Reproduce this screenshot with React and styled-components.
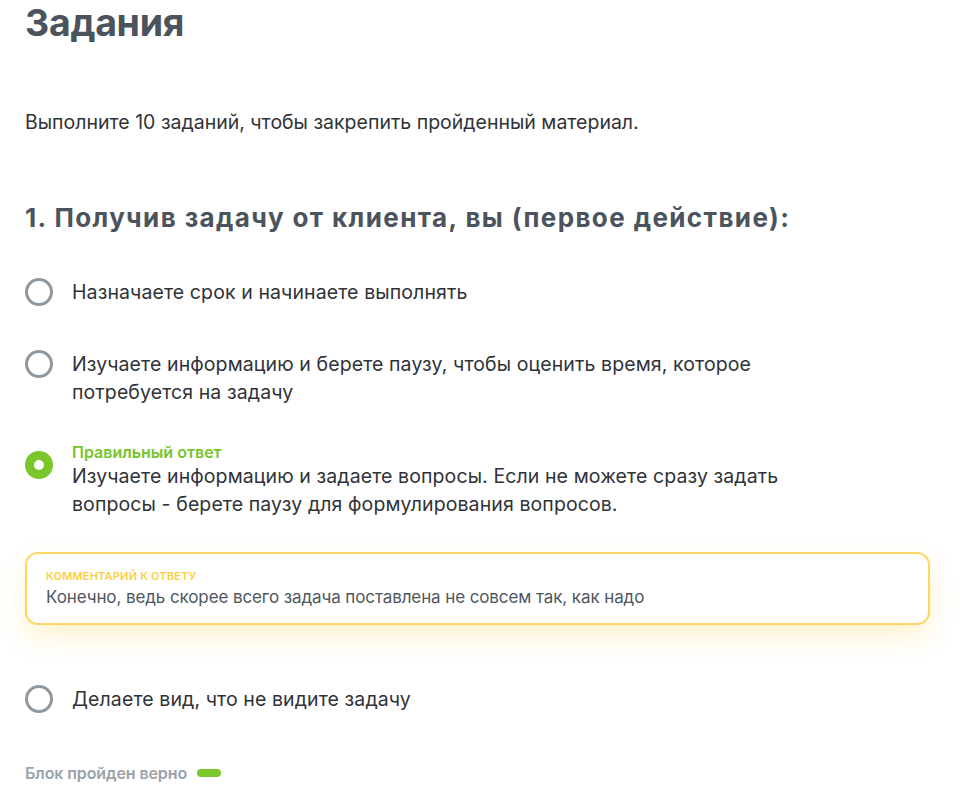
import React from 'react'
import styled, { createGlobalStyle } from 'styled-components'

const GlobalStyle = createGlobalStyle`
  body {
    margin: 0;
    background: #fff;
    font-family: Inter, "Noto Sans", sans-serif;
  }
`

const Page = styled.div`
  padding: 0 30px 0 25px;
  width: 905px;
`

const Title = styled.h1`
  margin: 0;
  font-size: 37.5px;
  line-height: 46px;
  font-weight: 700;
  color: #4b535d;
  letter-spacing: -0.3px;
`

const Intro = styled.p`
  margin: 62px 0 0;
  font-size: 19.5px;
  line-height: 28px;
  color: #2f3337;
  letter-spacing: 0;
`

const Question = styled.h2`
  margin: 66px 0 0;
  font-size: 26px;
  line-height: 32px;
  font-weight: 700;
  color: #4b535d;
  letter-spacing: 1.4px;
`

const Options = styled.div`
  margin-top: 44px;
  display: flex;
  flex-direction: column;
`

const Option = styled.div`
  display: flex;
  align-items: flex-start;
  gap: 19px;
  margin-top: ${(p) => p.$gap || 0}px;
`

const Radio = styled.span`
  flex: none;
  box-sizing: border-box;
  width: 28px;
  height: 28px;
  border-radius: 50%;
  margin-top: ${(p) => (p.$checked ? 9 : 0)}px;
  border: ${(p) => (p.$checked ? '9px solid #7ac72c' : '3px solid #8f989f')};
  background: #fff;
`

const OptionBody = styled.div`
  display: flex;
  flex-direction: column;
  max-width: 730px;
`

const CorrectLabel = styled.div`
  font-size: 16px;
  line-height: 20px;
  font-weight: 600;
  color: #77c52c;
`

const OptionText = styled.div`
  font-size: 19.5px;
  line-height: 28px;
  color: #2f3337;
  letter-spacing: 0.1px;
`

const Comment = styled.div`
  margin-top: 34px;
  border: 2px solid #fdd664;
  border-radius: 13px;
  padding: 15px 19px 14px;
  box-shadow: 0 12px 26px rgba(255, 200, 60, 0.24);
  background: #fff;
`

const CommentLabel = styled.div`
  font-size: 11px;
  line-height: 14px;
  font-weight: 600;
  color: #fccf3f;
  text-transform: uppercase;
  letter-spacing: 0.2px;
`

const CommentText = styled.div`
  margin-top: 2px;
  font-size: 17px;
  line-height: 24px;
  color: #4f565e;
  letter-spacing: -0.1px;
`

const Footer = styled.div`
  margin-top: 50px;
  display: flex;
  align-items: center;
  gap: 10px;
  font-size: 16px;
  line-height: 20px;
  font-weight: 600;
  color: #9aa2aa;
  letter-spacing: -0.1px;
`

const Pill = styled.span`
  width: 24px;
  height: 8px;
  border-radius: 4px;
  background: #7ac72c;
`

const answers = [
  { text: 'Назначаете срок и начинаете выполнять', gap: 0 },
  {
    text: 'Изучаете информацию и берете паузу, чтобы оценить время, которое потребуется на задачу',
    gap: 44,
  },
  {
    text: 'Изучаете информацию и задаете вопросы. Если не можете сразу задать вопросы - берете паузу для формулирования вопросов.',
    gap: 36,
    correct: true,
    comment: 'Конечно, ведь скорее всего задача поставлена не совсем так, как надо',
  },
  { text: 'Делаете вид, что не видите задачу', gap: 60 },
]

const App = () => {
  return (
    <>
      <GlobalStyle />
      <Page>
        <Title>Задания</Title>
        <Intro>Выполните 10 заданий, чтобы закрепить пройденный материал.</Intro>
        <Question>1. Получив задачу от клиента, вы (первое действие):</Question>
        <Options>
          {answers.map((a, i) => (
            <React.Fragment key={i}>
              <Option $gap={a.gap}>
                <Radio $checked={a.correct} />
                <OptionBody>
                  {a.correct && <CorrectLabel>Правильный ответ</CorrectLabel>}
                  <OptionText>{a.text}</OptionText>
                </OptionBody>
              </Option>
              {a.comment && (
                <Comment>
                  <CommentLabel>Комментарий к ответу</CommentLabel>
                  <CommentText>{a.comment}</CommentText>
                </Comment>
              )}
            </React.Fragment>
          ))}
        </Options>
        <Footer>
          Блок пройден верно
          <Pill />
        </Footer>
      </Page>
    </>
  )
}

export default App
